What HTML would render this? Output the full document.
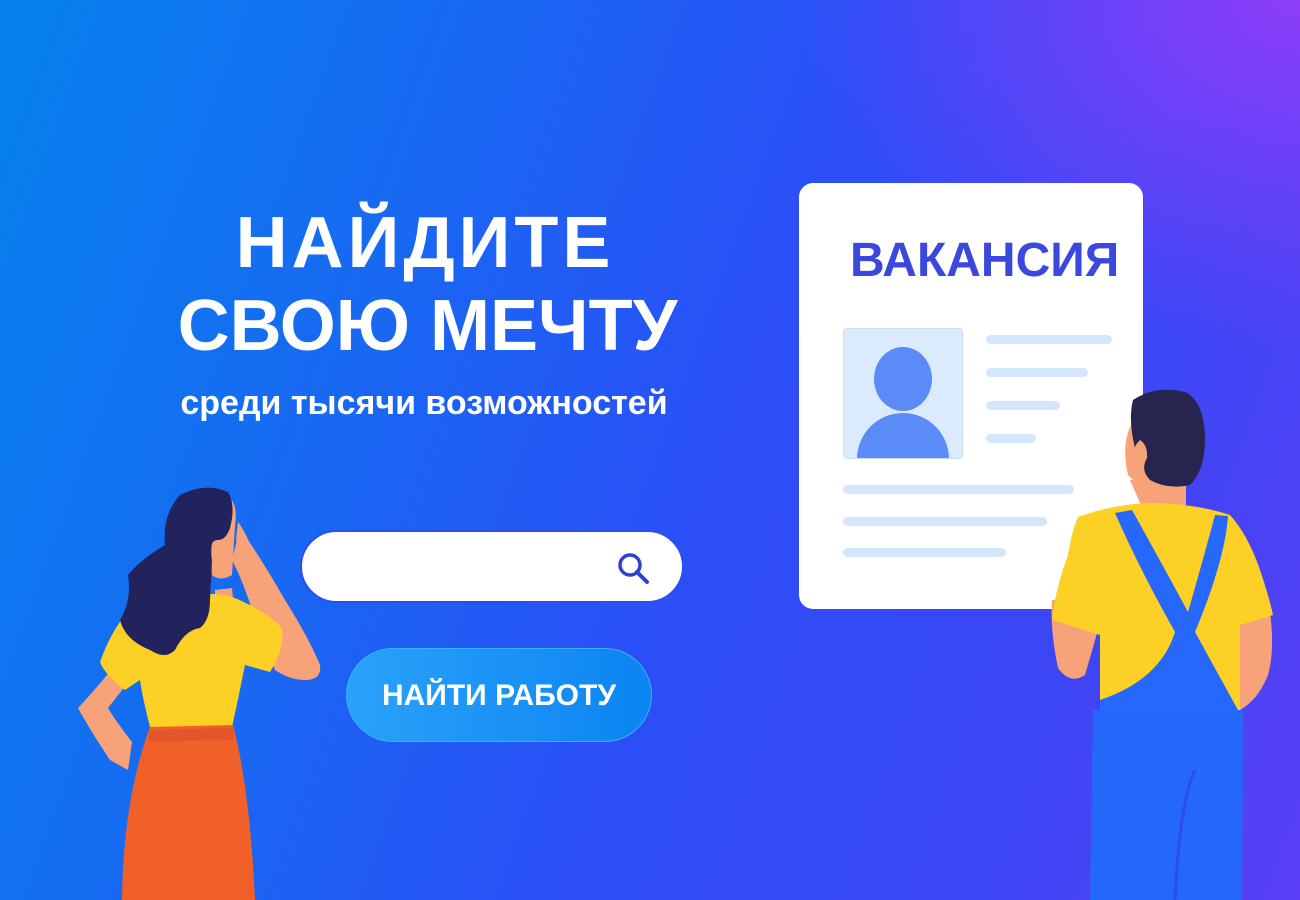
<!DOCTYPE html>
<html><head><meta charset="utf-8"><style>
*{margin:0;padding:0;box-sizing:border-box}
body{width:1300px;height:900px;overflow:hidden;position:relative;font-family:"Liberation Sans","DejaVu Sans",sans-serif;
background:linear-gradient(110deg,#0682ee 0%,#1868f2 30%,#2c4ef7 55%,#3c46f5 80%,#5a3ff6 100%)}
.glow{position:absolute;inset:0;background:radial-gradient(ellipse 500px 350px at 1300px 0,rgba(150,60,250,.9),rgba(150,60,250,0) 100%)}
.t{position:absolute;color:#fff;font-weight:bold;text-align:center;white-space:nowrap}
.search{position:absolute;left:300px;top:530px;width:384px;height:73px;background:#fff;border-radius:37px;border:2px solid #2a4ef0}
.btn{position:absolute;left:346px;top:648px;width:306px;height:94px;border-radius:47px;background:linear-gradient(90deg,#2aa2fa,#0c84f2);border:1px solid #3ab0ff;color:#fff;font-weight:bold;font-size:30px;text-align:center;line-height:94px}
.card{position:absolute;left:799px;top:183px;width:344px;height:426px;background:#fff;border-radius:14px}
.ln{position:absolute;height:9px;border-radius:5px;background:#d3e6fb}
</style></head><body>
<div class="glow"></div>
<div class="t" style="left:0;width:850px;top:202px;font-size:72px;letter-spacing:4px">НАЙДИТЕ</div>
<div class="t" style="left:0;width:855px;top:285px;font-size:72px;letter-spacing:0px">СВОЮ МЕЧТУ</div>
<div class="t" style="left:0;width:848px;top:384px;font-size:34px;font-weight:bold">среди тысячи возможностей</div>
<div class="search"><svg style="position:absolute;left:312px;top:17px" width="40" height="40" viewBox="0 0 40 40"><circle cx="16" cy="16" r="10" fill="none" stroke="#2a40d8" stroke-width="3.5"/><line x1="23" y1="23" x2="33" y2="33" stroke="#2a40d8" stroke-width="4" stroke-linecap="round"/></svg></div>
<div class="btn">НАЙТИ РАБОТУ</div>
<div class="card">
<div style="position:absolute;left:51px;top:50px;font-size:48px;font-weight:bold;color:#3a48de;white-space:nowrap">ВАКАНСИЯ</div>
<div style="position:absolute;left:44px;top:145px;width:120px;height:131px;background:#dbeafd;border-radius:4px;overflow:hidden;border:1px solid #c8dcf8">
<div style="position:absolute;left:30px;top:18px;width:58px;height:64px;border-radius:50%;background:#5b8bf6"></div>
<div style="position:absolute;left:13px;top:84px;width:92px;height:80px;border-radius:46px 46px 0 0;background:#5b8bf6"></div>
</div>
<div class="ln" style="left:187px;top:152px;width:126px"></div>
<div class="ln" style="left:187px;top:185px;width:102px"></div>
<div class="ln" style="left:187px;top:218px;width:74px"></div>
<div class="ln" style="left:187px;top:251px;width:50px"></div>
<div class="ln" style="left:44px;top:302px;width:231px"></div>
<div class="ln" style="left:44px;top:334px;width:204px"></div>
<div class="ln" style="left:44px;top:365px;width:163px"></div>
</div>
<svg style="position:absolute;left:0;top:0" width="1300" height="900" viewBox="0 0 1300 900">
<!-- woman -->
<path d="M240 528 Q262 560 285 600 Q310 640 320 665 Q322 680 305 680 Q290 680 275 670 L255 620 Q245 585 232 560Z" fill="#f8a27a"/>
<path d="M115 665 Q95 690 78 708 Q90 730 110 760 L128 770 L132 742 Q115 720 108 708 L130 680Z" fill="#f8a27a"/>
<path d="M215 590 L232 588 L235 620 L215 625Z" fill="#f8a27a"/>
<path d="M140 600 Q200 590 230 596 Q265 610 282 628 Q285 648 270 672 L245 665 Q238 700 232 727 L150 727 Q143 700 140 680 L125 690 Q105 675 100 662 Q115 620 140 600Z" fill="#fdd026"/>
<path d="M150 727 L233 725 Q250 790 255 900 L122 900 Q123 800 150 727Z" fill="#f2602a"/>
<path d="M150 730 L233 728 L234 740 L148 742Z" fill="#e4552a"/>
<path d="M215 490 Q240 495 235 525 L232 575 Q220 582 212 575 Q210 545 215 520Z" fill="#f8a27a"/>
<path d="M228 492 Q205 482 180 495 Q162 515 165 545 Q140 560 128 575 Q132 600 120 620 Q125 640 150 650 Q165 660 175 650 Q185 630 200 628 Q210 620 210 600 L212 560 Q208 540 218 540 Q226 540 230 528 Q236 505 228 492Z" fill="#22235c"/>
<path d="M238 522 Q248 535 258 565 L245 580 Q240 560 236 540Z" fill="#f8a27a"/>
<!-- man -->
<path d="M1052 600 Q1050 630 1058 668 Q1070 685 1085 675 L1098 630 L1098 600Z" fill="#f8a27a"/>
<path d="M1240 600 L1270 612 Q1275 650 1268 675 Q1258 700 1240 710 L1238 650Z" fill="#f8a27a"/>
<path d="M1130 480 L1186 480 L1186 510 L1144 512Z" fill="#f8a27a"/>
<path d="M1135 418 Q1120 440 1128 475 Q1140 490 1165 485 L1170 440Z" fill="#f8a27a"/>
<path d="M1133 400 Q1155 385 1185 392 Q1205 402 1205 440 Q1205 470 1190 485 Q1168 490 1150 480 Q1140 470 1147 458 Q1148 445 1140 440 Q1135 445 1135 448 Q1128 420 1133 400Z" fill="#27254f"/>
<path d="M1078 517 Q1120 502 1160 503 Q1200 505 1230 515 Q1248 535 1260 570 Q1270 600 1273 615 L1240 625 L1240 710 L1100 710 L1100 635 L1052 620 Q1055 590 1068 555 Q1072 530 1078 517Z" fill="#fdd026"/>
<path d="M1115 513 L1132 510 Q1160 560 1188 612 Q1203 560 1215 515 L1228 516 Q1225 560 1195 632 L1238 710 L1100 710 L1100 700 Q1160 680 1175 632 Q1140 570 1115 513Z" fill="#2568fb"/>
<path d="M1093 710 L1243 710 L1242 900 L1090 900Z" fill="#2468fb"/>
<path d="M1195 770 Q1180 800 1175 900" stroke="#2d4ce8" stroke-width="3" fill="none"/>
</svg>
</body></html>
